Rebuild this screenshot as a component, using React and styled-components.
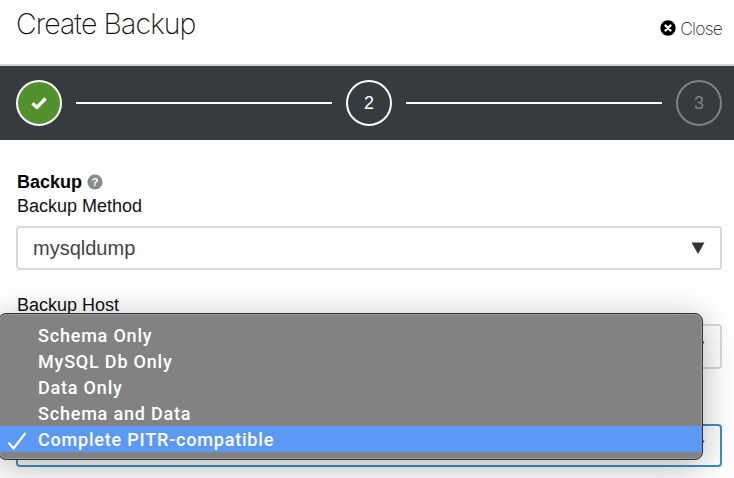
import React from 'react'
import styled, { createGlobalStyle } from 'styled-components'

const Global = createGlobalStyle`
  html, body { margin: 0; padding: 0; background: #fff; }
  body { width: 734px; height: 478px; overflow: hidden; font-family: "Liberation Sans", Arial, sans-serif; }
`

const options = ['Schema Only', 'MySQL Db Only', 'Data Only', 'Schema and Data', 'Complete PITR-compatible']

const Caret = () => (
  <CaretIcon viewBox="0 0 14 12">
    <path d="M0.5 0.5h13L7 12z" fill="#333" />
  </CaretIcon>
)

const Step = ({ state, children }) => <StepCircle $state={state}>{children}</StepCircle>

const App = () => (
  <Page>
    <Global />
    <Header>
      <Title>Create Backup</Title>
      <CloseLink>
        <svg width="16" height="16" viewBox="0 0 16 16">
          <circle cx="8" cy="8" r="7.7" fill="#000" />
          <path d="M5.5 5.5l5 5M10.5 5.5l-5 5" stroke="#fff" strokeWidth="2.4" strokeLinecap="round" />
        </svg>
        Close
      </CloseLink>
    </Header>
    <Stepper>
      <Step state="done">
        <svg width="18" height="14" viewBox="0 0 18 14">
          <path d="M2.5 7.2l4.5 4.2L15.5 2.5" fill="none" stroke="#fff" strokeWidth="3.4" strokeLinejoin="round" />
        </svg>
      </Step>
      <StepLine />
      <Step state="active">2</Step>
      <StepLine />
      <Step state="pending">3</Step>
    </Stepper>
    <Form>
      <SectionTitle>
        Backup
        <svg width="16" height="16" viewBox="0 0 16 16">
          <circle cx="8" cy="8" r="7.6" fill="#8a8a8a" />
          <text x="8" y="12" textAnchor="middle" fontSize="11.5" fontWeight="700" fill="#fff" fontFamily="Liberation Sans">?</text>
        </svg>
      </SectionTitle>
      <Label $top={2}>Backup Method</Label>
      <SelectBox $top={9}>
        <span>mysqldump</span>
        <Caret />
      </SelectBox>
      <Label $top={24}>Backup Host</Label>
      <SelectBox $top={8} $height={45}>
        <span />
        <Caret />
      </SelectBox>
      <SelectBox $top={55} $height={43} $focused>
        <span />
        <Caret />
      </SelectBox>
    </Form>
    <Menu>
      {options.map((o, i) => (
        <MenuItem key={o} $selected={i === options.length - 1}>
          {i === options.length - 1 && (
            <TickIcon viewBox="0 0 20 20">
              <path d="M1.5 12.5l5 6L18.5 3" fill="none" stroke="#fff" strokeWidth="2.2" />
            </TickIcon>
          )}
          {o}
        </MenuItem>
      ))}
    </Menu>
  </Page>
)

export default App

const Page = styled.div`
  position: relative;
  width: 734px;
  height: 478px;
  overflow: hidden;
`

const Header = styled.div`
  display: flex;
  justify-content: space-between;
  height: 66px;
  padding: 0 12px 0 16px;
  box-sizing: border-box;
  border-bottom: 2px solid #d4d4d4;
`

const Title = styled.h1`
  margin: 6px 0 0;
  font-family: "Inter", sans-serif;
  font-size: 28.5px;
  line-height: 36px;
  font-weight: 200;
  letter-spacing: -0.9px;
  color: #111;
`

const CloseLink = styled.div`
  display: flex;
  align-items: center;
  gap: 4px;
  height: 20px;
  margin-top: 18px;
  font-family: "Inter", sans-serif;
  font-size: 17.5px;
  font-weight: 200;
  letter-spacing: -0.8px;
  color: #222;
`

const Stepper = styled.div`
  display: flex;
  align-items: center;
  gap: 14px;
  height: 74px;
  padding: 0 12px 0 16px;
  background: #363b3f;
`

const StepCircle = styled.div`
  flex: none;
  display: flex;
  align-items: center;
  justify-content: center;
  width: 46px;
  height: 46px;
  box-sizing: border-box;
  border-radius: 50%;
  border: 2px solid ${p => (p.$state === 'pending' ? '#7f8284' : '#fff')};
  background: ${p => (p.$state === 'done' ? '#53912c' : 'transparent')};
  color: ${p => (p.$state === 'pending' ? '#7f8284' : '#fff')};
  font-size: 18px;
`

const StepLine = styled.div`
  flex: 1;
  height: 2px;
  background: #fff;
`

const Form = styled.div`
  display: flex;
  flex-direction: column;
  padding: 31px 12px 0 16px;
`

const SectionTitle = styled.div`
  display: flex;
  align-items: center;
  gap: 5px;
  padding-left: 1px;
  font-size: 18px;
  line-height: 22px;
  font-weight: 700;
  color: #000;
`

const Label = styled.div`
  margin-top: ${p => p.$top}px;
  padding-left: 1px;
  font-size: 18px;
  line-height: 22px;
  color: #111;
`

const SelectBox = styled.div`
  display: flex;
  align-items: center;
  justify-content: space-between;
  height: ${p => p.$height || 44}px;
  margin-top: ${p => p.$top}px;
  padding: 0 15px 0 15px;
  box-sizing: border-box;
  border: 2px solid ${p => (p.$focused ? '#3f8fc7' : '#d9d9d9')};
  border-radius: 4px;
  font-size: 20px;
  color: #444;
`

const CaretIcon = styled.svg`
  width: 14px;
  height: 12px;
`

const Menu = styled.div`
  position: absolute;
  left: -2px;
  top: 313px;
  width: 705px;
  height: 147px;
  box-sizing: border-box;
  padding: 8px 0 0;
  background: #818281;
  border: 1px solid #333;
  border-radius: 8px;
  box-shadow: 0 6px 34px rgba(0, 0, 0, 0.3), inset 0 0 0 1px #999;
`

const MenuItem = styled.div`
  position: relative;
  height: 26px;
  padding-left: 39px;
  font-family: "Roboto", sans-serif;
  font-size: 18px;
  font-weight: 500;
  line-height: 28px;
  letter-spacing: 0.8px;
  color: #fff;
  background: ${p => (p.$selected ? '#5c99f6' : 'transparent')};
`

const TickIcon = styled.svg`
  position: absolute;
  left: 8px;
  top: 4px;
  width: 20px;
  height: 20px;
`
